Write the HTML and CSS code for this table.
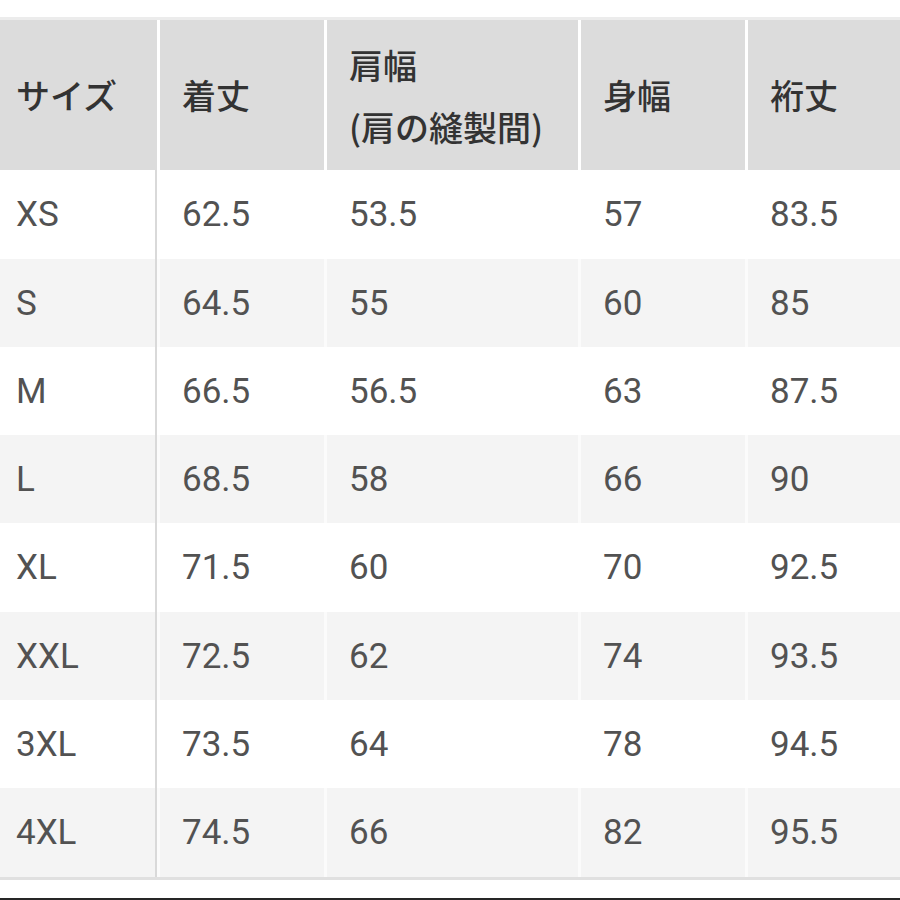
FILE: index.html
```html
<!DOCTYPE html>
<html lang="ja">
<head>
<meta charset="utf-8">
<title>サイズ表</title>
<link rel="stylesheet" href="styles.css">
</head>
<body>
<div class="page">
  <div class="chart">
    <div class="row head">
      <div class="cell first">サイズ</div>
      <div class="cell">着丈</div>
      <div class="cell two">肩幅<br>(肩の縫製間)</div>
      <div class="cell">身幅</div>
      <div class="cell">裄丈</div>
    </div>
    <div class="row body r89">
      <div class="cell first">XS</div><div class="cell">62.5</div><div class="cell">53.5</div><div class="cell">57</div><div class="cell">83.5</div>
    </div>
    <div class="row body alt">
      <div class="cell first">S</div><div class="cell">64.5</div><div class="cell">55</div><div class="cell">60</div><div class="cell">85</div>
    </div>
    <div class="row body">
      <div class="cell first">M</div><div class="cell">66.5</div><div class="cell">56.5</div><div class="cell">63</div><div class="cell">87.5</div>
    </div>
    <div class="row body alt">
      <div class="cell first">L</div><div class="cell">68.5</div><div class="cell">58</div><div class="cell">66</div><div class="cell">90</div>
    </div>
    <div class="row body r89">
      <div class="cell first">XL</div><div class="cell">71.5</div><div class="cell">60</div><div class="cell">70</div><div class="cell">92.5</div>
    </div>
    <div class="row body alt">
      <div class="cell first">XXL</div><div class="cell">72.5</div><div class="cell">62</div><div class="cell">74</div><div class="cell">93.5</div>
    </div>
    <div class="row body">
      <div class="cell first">3XL</div><div class="cell">73.5</div><div class="cell">64</div><div class="cell">78</div><div class="cell">94.5</div>
    </div>
    <div class="row body alt r89">
      <div class="cell first">4XL</div><div class="cell">74.5</div><div class="cell">66</div><div class="cell">82</div><div class="cell">95.5</div>
    </div>
  </div>
  <div class="bottom-rule"></div>
</div>
</body>
</html>
```

FILE: styles.css
```css
html, body {
  margin: 0;
  padding: 0;
  background: #ffffff;
}

.page {
  width: 900px;
  height: 900px;
  display: flex;
  flex-direction: column;
  overflow: hidden;
}

.chart {
  margin-top: 17px;
  border-top: 3px solid #ececec;
  border-bottom: 3px solid #e0e0e0;
  display: flex;
  flex-direction: column;
}

.row {
  display: grid;
  grid-template-columns: 157px 164px 251px 164px 152px;
  column-gap: 3px;
  background: #ffffff;
}

.cell {
  display: flex;
  align-items: center;
  padding-left: 22px;
  color: #525252;
  font-family: Roboto, "Noto Sans CJK JP", sans-serif;
}

.cell.first {
  padding-left: 16px;
}

.head {
  height: 150px;
}

.head .cell {
  background: #dcdcdc;
  color: #333333;
  font-family: "Noto Sans CJK JP", sans-serif;
  font-weight: 500;
  font-size: 34px;
  line-height: 40px;
}

.head .cell.two {
  line-height: 62px;
  padding-top: 2px;
}

.body {
  height: 88px;
}

.body.r89 {
  height: 89px;
}

.body .cell {
  font-size: 35px;
  font-weight: 400;
}

.body .cell.first {
  box-shadow: inset -2px 0 0 #d9d9d9;
}

.body.alt {
  background: #fbfbfb;
}

.body.alt .cell {
  background: #f4f4f4;
}

.bottom-rule {
  margin-top: auto;
  height: 2px;
  background: #262626;
}
```
